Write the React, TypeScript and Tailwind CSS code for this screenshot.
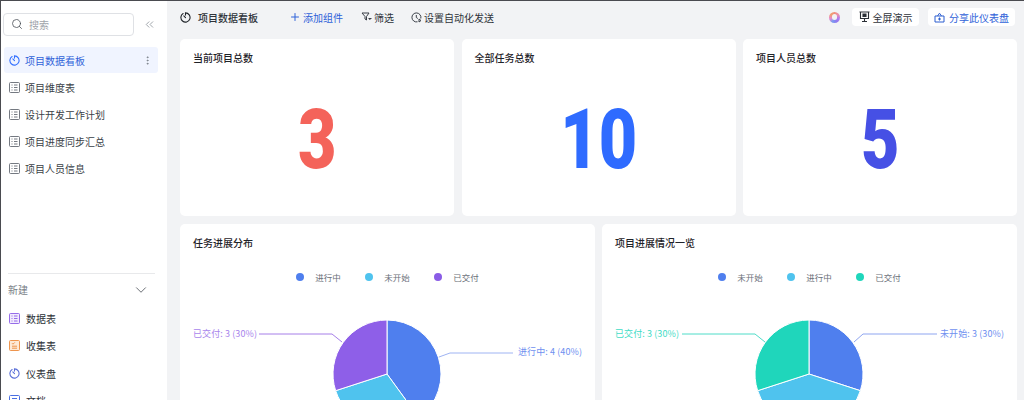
import React from "react";
import { Search, ChevronsLeft, ChevronDown, EllipsisVertical, Plus } from "lucide-react";

const font = { fontFamily: '"Noto Sans CJK SC", "Inter", sans-serif' };

function Clock({ c = "#1f2329", s = 11 }: { c?: string; s?: number }) {
  return (
    <svg width={s} height={s} viewBox="0 0 12 12" fill="none" stroke={c} strokeWidth="1.2" strokeLinecap="round">
      <path d="M3.4 1.7A5 5 0 1 0 6 1v2.4" />
      <path d="M4.2 4.3 6 6.2" />
    </svg>
  );
}

function TableIcon({ c = "#646a73", bg = "none" }: { c?: string; bg?: string }) {
  return (
    <svg width="11" height="11" viewBox="0 0 11 11" fill={bg} stroke={c} strokeWidth="0.9">
      <rect x="0.5" y="0.5" width="10" height="10" rx="1" />
      <path d="M2.5 3h1M2.5 5.5h1M2.5 8h1M5 3h3.5M5 5.5h3.5M5 8h3.5" />
    </svg>
  );
}

function FormIcon() {
  return (
    <svg width="11" height="11" viewBox="0 0 11 11" fill="none" stroke="#ec8a3c" strokeWidth="0.9">
      <rect x="0.5" y="0.5" width="10" height="10" rx="1" fill="#fde9d6" />
      <path d="M3 3.2 4 4.2 5.8 2.4M3 6.2h5M3 8.2h5" />
    </svg>
  );
}

function DocIcon() {
  return (
    <svg width="11" height="11" viewBox="0 0 11 11" fill="none" stroke="#4a6fe3" strokeWidth="1">
      <rect x="0.5" y="0.5" width="10" height="10" rx="1" />
      <path d="M3 3.5h5M3 6h5" />
    </svg>
  );
}

function NavItem({ label, active }: { label: string; active?: boolean }) {
  return (
    <div className={`flex items-center h-[26px] pl-[3px] pr-[5px] rounded-[3px] ${active ? "bg-[#f0f4ff] text-[#2f62d9]" : "text-[#3a3f47]"}`}>
      <span className="w-[15px] flex items-center justify-center shrink-0 mr-[2px]">
        {active ? <Clock c="#3370ff" /> : <TableIcon />}
      </span>
      <span className="text-[10px] ml-[1px] flex-1">{label}</span>
      {active && <EllipsisVertical size={11} color="#7b818a" />}
    </div>
  );
}

function NewItem({ label, icon }: { label: string; icon: React.ReactNode }) {
  return (
    <div className="flex items-center h-[27.3px] pl-[8px] text-[#2b2f36] shrink-0">
      <span className="w-[11px] flex items-center justify-center">{icon}</span>
      <span className="text-[10px] ml-[6px]">{label}</span>
    </div>
  );
}

function Stat({ title, value, color }: { title: string; value: string; color: string }) {
  return (
    <div className="flex-1 bg-white rounded-[5px] px-[13px] pt-[11px] flex flex-col">
      <div className="text-[10px] font-medium text-[#1f2329] leading-[16px]">{title}</div>
      <div className="flex-1 flex items-center justify-center pb-[2px]">
        <span
          className="inline-block text-[84px] font-black leading-none scale-x-[0.79]"
          style={{ color, fontFamily: '"Roboto", sans-serif' }}
        >
          {value}
        </span>
      </div>
    </div>
  );
}

const polar = (cx: number, cy: number, r: number, deg: number): [number, number] => {
  const a = ((deg - 90) * Math.PI) / 180;
  return [cx + r * Math.cos(a), cy + r * Math.sin(a)];
};

function Slice({ cx, cy, r, from, to, fill }: { cx: number; cy: number; r: number; from: number; to: number; fill: string }) {
  const [x1, y1] = polar(cx, cy, r, from);
  const [x2, y2] = polar(cx, cy, r, to);
  const large = to - from > 180 ? 1 : 0;
  return <path d={`M${cx} ${cy}L${x1} ${y1}A${r} ${r} 0 ${large} 1 ${x2} ${y2}Z`} fill={fill} stroke="#fff" strokeWidth="1" />;
}

function Legend({ items }: { items: [string, string][] }) {
  return (
    <div className="flex justify-center gap-[24.5px] text-[8.5px] text-[#6b7079] leading-[12px]">
      {items.map(([label, color]) => (
        <div key={label} className="flex items-center gap-[11px]">
          <span className="w-[8px] h-[8px] rounded-full" style={{ background: color }} />
          <span>{label}</span>
        </div>
      ))}
    </div>
  );
}

function PieCard({
  title,
  legend,
  children,
}: {
  title: string;
  legend: [string, string][];
  children: React.ReactNode;
}) {
  return (
    <div className="flex-1 bg-white rounded-t-[5px] px-[13px] pt-[11px] h-[190px] relative">
      <div className="text-[10px] font-medium text-[#1f2329] leading-[16px]">{title}</div>
      <div className="mt-[20px]">
        <Legend items={legend} />
      </div>
      {children}
    </div>
  );
}

export default function App() {
  return (
    <div
      className="w-[1024px] h-[400px] overflow-hidden flex bg-[#f2f3f5] border-t border-l border-[#4a4b50]"
      style={font}
    >
      <aside className="w-[166px] shrink-0 bg-white flex flex-col h-full overflow-hidden">
        <div className="h-[272px] shrink-0">
          <div className="flex items-center pl-[2px] pt-[12px]">
            <div className="w-[131px] h-[23px] border border-[#dfe1e5] rounded-[4px] flex items-center pl-[7px] pb-[1px] gap-[6px]">
              <Search size={12} color="#4b5058" strokeWidth={1.6} />
              <span className="text-[10px] text-[#a0a4ab]">搜索</span>
            </div>
            <ChevronsLeft size={13} color="#8d929a" className="ml-[9px]" strokeWidth={1.5} />
          </div>
          <div className="mt-[11px] ml-[3px] w-[154px] flex flex-col gap-[1.2px]">
            <NavItem label="项目数据看板" active />
            <NavItem label="项目维度表" />
            <NavItem label="设计开发工作计划" />
            <NavItem label="项目进度同步汇总" />
            <NavItem label="项目人员信息" />
          </div>
        </div>
        <div className="ml-[7px] w-[147px] border-t border-[#e8e9eb] shrink-0" />
        <div className="flex items-center justify-between pl-[7px] pr-[17px] h-[31px] shrink-0">
          <span className="text-[10px] text-[#7a7f87]">新建</span>
          <ChevronDown size={18} color="#4b5058" strokeWidth={1.1} />
        </div>
        <div className="flex flex-col shrink-0">
          <NewItem label="数据表" icon={<TableIcon c="#8a5ce6" bg="#f1ebfd" />} />
          <NewItem label="收集表" icon={<FormIcon />} />
          <NewItem label="仪表盘" icon={<Clock c="#5a6fd8" />} />
          <NewItem label="文档" icon={<DocIcon />} />
        </div>
      </aside>

      <main className="flex-1 min-w-0 pl-[13px] pr-[7px] flex flex-col">
        <header className="h-[38px] pb-[6px] pr-[2px] shrink-0 flex items-center text-[10px] text-[#2f333a]">
          <Clock />
          <span className="ml-[7px] font-medium">项目数据看板</span>
          <Plus size={12} color="#2f62d9" className="ml-[31px]" />
          <span className="ml-[2px] text-[#2f62d9]">添加组件</span>
          <svg className="ml-[18px]" width="11" height="10" viewBox="0 0 11 10" fill="none" stroke="#3a3f47" strokeWidth="1">
            <path d="M1 1h7L5.5 4.5V8L4 7V4.5Z" />
            <path d="M7.5 6.5h3M8.5 8l1-1.5" />
          </svg>
          <span className="ml-[2px]">筛选</span>
          <svg className="ml-[17px]" width="11" height="11" viewBox="0 0 11 11" fill="none" stroke="#3a3f47" strokeWidth="1">
            <path d="M9.8 6.5A4.5 4.5 0 1 0 6.5 9.8" />
            <path d="M5.3 3v2.5l1.5 1M8 7v3l2-1.5Z" />
          </svg>
          <span className="ml-[2px]">设置自动化发送</span>
          <div className="flex-1" />
          <div className="w-[11px] h-[11px] rounded-full mr-[12px] bg-[conic-gradient(#f0907a,#ea8fb0,#b07bf0,#8f7bf0,#7a9bf0,#e88ad0,#f0a070,#f0907a)] flex items-center justify-center">
            <div className="w-[5.5px] h-[5.5px] rounded-full bg-[#f2f3f5]" />
          </div>
          <div className="h-[18px] w-[67px] rounded-[4px] bg-white flex items-center justify-center gap-[3px]">
            <svg width="11" height="12" viewBox="0 0 11 12" fill="none" stroke="#2b2f36" strokeWidth="1.1">
              <path d="M0.5 1h10M1.5 1v6.5h8V1M5.5 7.5V10M3 10.5h5" />
              <path d="M4 3h3v2.5H4Z" fill="#2b2f36" />
            </svg>
            <span className="text-[#2f333a]">全屏演示</span>
          </div>
          <div className="ml-[9px] h-[18px] w-[87px] rounded-[4px] bg-white flex items-center justify-center gap-[4px] text-[#2f62d9]">
            <svg width="11" height="11" viewBox="0 0 11 11" fill="none" stroke="#2d5fd0" strokeWidth="1">
              <path d="M1 4h9v6H1ZM3.5 4l2-2.8 2 2.8M4 7h3M5.5 5.5v3" />
            </svg>
            <span>分享此仪表盘</span>
          </div>
        </header>

        <div className="flex gap-[7.5px] h-[177px] shrink-0">
          <Stat title="当前项目总数" value="3" color="#f4635a" />
          <Stat title="全部任务总数" value="10" color="#2f6bff" />
          <Stat title="项目人员总数" value="5" color="#4650e5" />
        </div>

        <div className="flex gap-[7px] mt-[8px]">
          <PieCard
            title="任务进展分布"
            legend={[
              ["进行中", "#4f7fee"],
              ["未开始", "#4fc3ee"],
              ["已交付", "#8a5ce6"],
            ]}
          >
            <svg className="absolute left-0 top-0" width="415" height="190" viewBox="0 0 415 190">
              <Slice cx={207} cy={150} r={54} from={0} to={144} fill="#4f7fee" />
              <Slice cx={207} cy={150} r={54} from={144} to={252} fill="#4fc3ee" />
              <Slice cx={207} cy={150} r={54} from={252} to={360} fill="#8e5fe8" />
              <path d="M259 133 270 129H333" fill="none" stroke="#9fb4f3" strokeWidth="1" />
              <path d="M79 110H152L162 118" fill="none" stroke="#a67fe8" strokeWidth="1" />
            </svg>
            <span className="absolute left-[13px] top-[104px] text-[9px] leading-[12px] text-[#a885ec] tracking-[0.1px]">已交付: 3 (30%)</span>
            <span className="absolute left-[338px] top-[122px] text-[9px] leading-[12px] text-[#6f90f0] tracking-[0.1px]">进行中: 4 (40%)</span>
          </PieCard>
          <PieCard
            title="项目进展情况一览"
            legend={[
              ["未开始", "#4f7fee"],
              ["进行中", "#4fc3ee"],
              ["已交付", "#1fd6bb"],
            ]}
          >
            <svg className="absolute left-0 top-0" width="415" height="190" viewBox="0 0 415 190">
              <Slice cx={207} cy={150} r={54} from={0} to={108} fill="#4f7fee" />
              <Slice cx={207} cy={150} r={54} from={108} to={252} fill="#4fc3ee" />
              <Slice cx={207} cy={150} r={54} from={252} to={360} fill="#1fd6bb" />
              <path d="M252 118 261 110H335" fill="none" stroke="#8ea5f0" strokeWidth="1" />
              <path d="M80 110H153L163 118" fill="none" stroke="#4fdcc8" strokeWidth="1" />
            </svg>
            <span className="absolute left-[13px] top-[104px] text-[9px] leading-[12px] text-[#3fdcc6] tracking-[0.1px]">已交付: 3 (30%)</span>
            <span className="absolute left-[338px] top-[104px] text-[9px] leading-[12px] text-[#6f90f0] tracking-[0.1px]">未开始: 3 (30%)</span>
          </PieCard>
        </div>
      </main>
    </div>
  );
}
